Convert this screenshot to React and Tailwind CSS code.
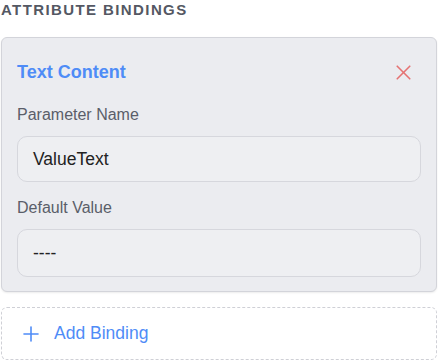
import { Plus, X } from 'lucide-react';

export default function App() {
  return (
    <div className="w-[438px] h-[360px] bg-white overflow-hidden font-['Liberation_Sans',Arial,sans-serif]">
      {/* titulo */}
      <h2 className="pl-[1px] pt-[1px] text-[15px] leading-[18px] font-bold tracking-[1.4px] text-[#545863] uppercase">
        Attribute Bindings
      </h2>

      {/* card */}
      <div className="mt-[18px] mx-[1px] bg-[#ebecf0] border border-[#d3d4da] rounded-[6px] shadow-[0_1px_2px_rgba(0,0,0,0.08)] px-[15px] pt-[22px] pb-[14px]">
        <div className="flex items-center justify-between h-[24px]">
          <span className="text-[18px] font-bold text-[#4f8cf7]">Text Content</span>
          <button className="mr-[5px] text-[#e57373]">
            <X size={25} strokeWidth={1.6} />
          </button>
        </div>

        <label className="block mt-[21px] text-[16px] leading-[20px] text-[#5a5e69]">Parameter Name</label>
        <div className="mt-[11px] h-[46px] rounded-[10px] border border-[#d6d7dd] bg-[#eeeff2] flex items-center px-[15px] text-[17.5px] text-[#222]">
          ValueText
        </div>

        <label className="block mt-[16px] text-[16px] leading-[20px] text-[#5a5e69]">Default Value</label>
        <div className="mt-[11px] h-[48px] rounded-[10px] border border-[#d6d7dd] bg-[#eeeff2] flex items-center px-[15px] text-[17.5px] text-[#222]">
          ----
        </div>
      </div>

      {/* adicionar */}
      <button className="mt-[15px] mx-[1px] w-[436px] h-[53px] border border-dashed border-[#cfd0d6] rounded-[6px] flex items-center pl-[17px] text-[#4f8cf7] text-[17.5px]">
        <Plus size={24} strokeWidth={1.6} />
        <span className="ml-[11px]">Add Binding</span>
      </button>
    </div>
  );
}
